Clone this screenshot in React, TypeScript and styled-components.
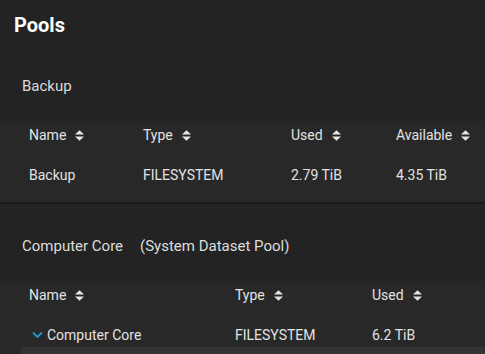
import React from "react";
import styled, { createGlobalStyle } from "styled-components";

const Global = createGlobalStyle`
  html, body { margin: 0; padding: 0; background: #232323; }
  body { font-family: Roboto, "Liberation Sans", sans-serif; color: #e0e0e0; overflow: hidden; }
`;

const Page = styled.div`
  width: 485px;
  height: 354px;
  overflow: hidden;
  background: #232323;
`;

const PageTitle = styled.h1`
  margin: 0;
  padding: 14px 14px 0;
  height: 40px;
  box-sizing: border-box;
  font-size: 20px;
  line-height: 22px;
  font-weight: 700;
  color: #ffffff;
`;

const Section = styled.section<{ $divider?: boolean }>`
  display: flex;
  flex-direction: column;
  border-bottom: ${(p) => (p.$divider ? "2px solid #1b1b1b" : "none")};
`;

const SectionTitle = styled.div<{ $h: number; $pt: number }>`
  display: flex;
  align-items: flex-start;
  gap: 17px;
  height: ${(p) => p.$h}px;
  box-sizing: border-box;
  padding: ${(p) => p.$pt}px 0 0 22px;
  font-size: 15px;
  line-height: 16px;
  color: #dcdcdc;
`;

const Table = styled.div<{ $pb: number }>`
  background: #282828;
  padding-bottom: ${(p) => p.$pb}px;
`;

const Row = styled.div<{ $cols: string; $head?: boolean }>`
  display: grid;
  grid-template-columns: ${(p) => p.$cols};
  padding-left: 29px;
  font-size: 14px;
  line-height: 14px;
  color: #e2e2e2;
  ${(p) =>
    p.$head
      ? "height: 28px; align-items: center;"
      : "height: 38px; box-sizing: border-box; padding-top: 13px;"}
`;

const Cell = styled.div`
  display: flex;
  align-items: center;
  white-space: nowrap;
`;

const SortIcon = styled.svg`
  margin-left: 9px;
  width: 9px;
  height: 11px;
`;

const Chevron = styled.svg`
  width: 11px;
  height: 8px;
  margin-left: 3px;
  margin-right: 4px;
`;

const ChildRow = styled.div`
  margin-left: 21px;
  height: 10px;
  background: #333333;
`;

const Sort = () => (
  <SortIcon viewBox="0 0 9 11">
    <path d="M0 4.6 L4.5 0.2 L9 4.6 Z" fill="#e4e4e4" />
    <path d="M0 6.4 L4.5 10.8 L9 6.4 Z" fill="#e4e4e4" />
  </SortIcon>
);

const Head = ({ label }: { label: string }) => (
  <Cell>
    {label}
    <Sort />
  </Cell>
);

const cols1 = "114px 148px 105px 1fr";
const cols2 = "206px 137px 1fr";

export default function App() {
  return (
    <Page>
      <Global />
      <PageTitle>Pools</PageTitle>
      <Section $divider>
        <SectionTitle $h={81} $pt={38}>Backup</SectionTitle>
        <Table $pb={15}>
          <Row $cols={cols1} $head>
            <Head label="Name" />
            <Head label="Type" />
            <Head label="Used" />
            <Head label="Available" />
          </Row>
          <Row $cols={cols1}>
            <Cell>Backup</Cell>
            <Cell>FILESYSTEM</Cell>
            <Cell>2.79 TiB</Cell>
            <Cell>4.35 TiB</Cell>
          </Row>
        </Table>
      </Section>
      <Section>
        <SectionTitle $h={77} $pt={34}>
          <span>Computer Core</span>
          <span>(System Dataset Pool)</span>
        </SectionTitle>
        <Table $pb={0}>
          <Row $cols={cols2} $head>
            <Head label="Name" />
            <Head label="Type" />
            <Head label="Used" />
          </Row>
          <Row $cols={cols2}>
            <Cell>
              <Chevron viewBox="0 0 11 8">
                <path d="M1 1.5 L5.5 6 L10 1.5" fill="none" stroke="#1a9ad6" strokeWidth="1.8" />
              </Chevron>
              Computer Core
            </Cell>
            <Cell>FILESYSTEM</Cell>
            <Cell>6.2 TiB</Cell>
          </Row>
          <ChildRow />
        </Table>
      </Section>
    </Page>
  );
}
